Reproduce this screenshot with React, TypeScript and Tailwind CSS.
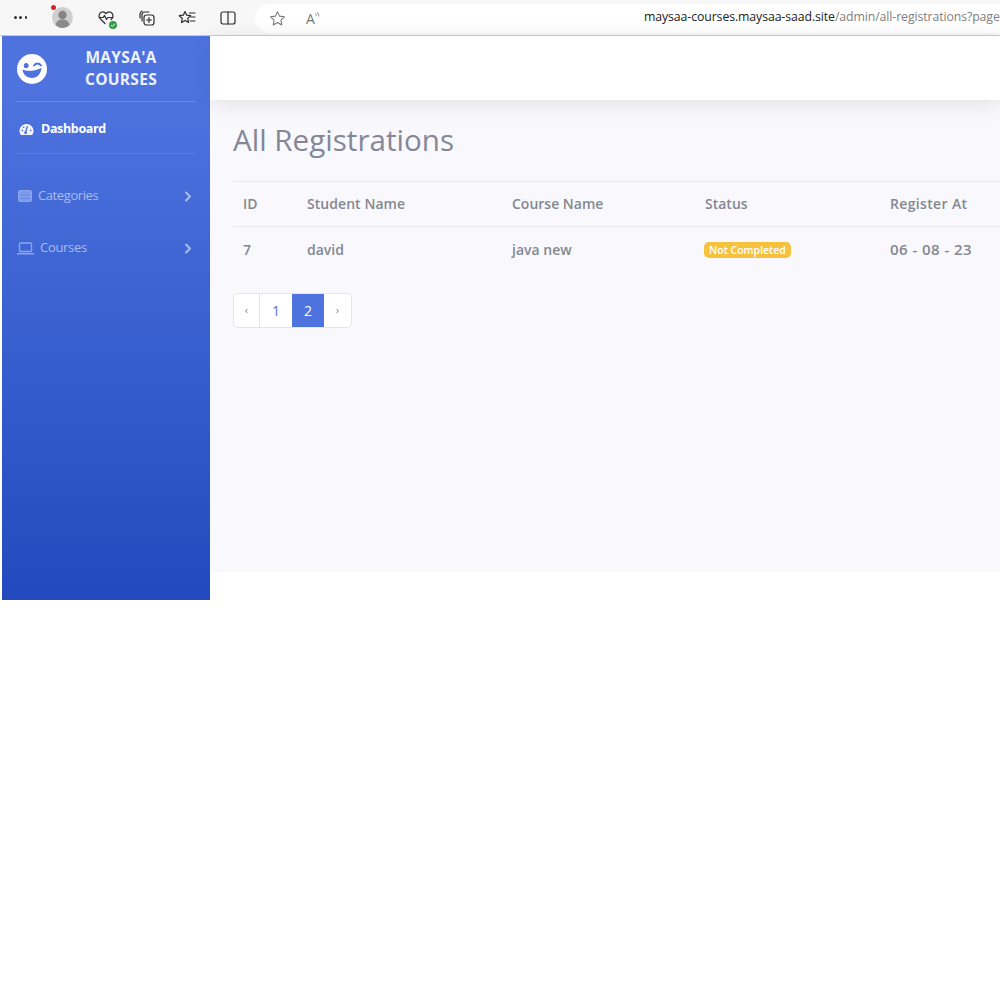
import React from "react";

const Chevron = () => (
  <svg width="8" height="11" viewBox="0 0 8 11" fill="none" className="shrink-0">
    <path d="M2 1.500 6 5.500 2 9.500" stroke="#a9bbef" strokeWidth="2.100" strokeLinecap="round" strokeLinejoin="round" />
  </svg>
);

const Wink = () => (
  <svg width="30" height="30" viewBox="0 0 30 30" className="shrink-0">
    <circle cx="15" cy="15" r="15" fill="#ffffff" />
    <ellipse cx="9.200" cy="11.500" rx="2.400" ry="2.600" fill="#4e73df" />
    <path d="M17 11.500c2-2.600 5-2.600 7 0" stroke="#4e73df" strokeWidth="2" fill="none" strokeLinecap="round" />
    <path d="M5.500 15.500c4 2 11 2 19-1.500-.5 6-4.500 10-9.500 10-5.500 0-9-4-9.500-8.500Z" fill="#4e73df" />
  </svg>
);

const Gauge = () => (
  <svg width="15" height="13" viewBox="0 0 16 14" className="shrink-0">
    <path d="M8 1a7.500 7.500 0 0 0-6.400 11.400c.2.300.5.600.9.600h11c.4 0 .7-.3.9-.6A7.500 7.500 0 0 0 8 1Z" fill="#f4f6fd" />
    <path d="M8.800 4 7.200 9.500" stroke="#4e73df" strokeWidth="1.500" strokeLinecap="round" />
    <circle cx="7" cy="10.500" r="1.500" fill="#4e73df" />
    <circle cx="3.500" cy="8" r=".9" fill="#4e73df" />
    <circle cx="12.500" cy="8" r=".9" fill="#4e73df" />
    <circle cx="5" cy="4.800" r=".9" fill="#4e73df" />
  </svg>
);

const ListBox = () => (
  <svg width="14" height="12" viewBox="0 0 14 12" className="shrink-0">
    <rect x="0.500" y="0.500" width="13" height="11" rx="1.500" fill="#7f9ae9" stroke="#8ca5ec" />
    <path d="M2.500 8.500h9M2.500 5h9" stroke="#6685e4" strokeWidth="1" />
  </svg>
);

const Laptop = () => (
  <svg width="17" height="13" viewBox="0 0 17 13" fill="none" className="shrink-0">
    <rect x="2.500" y="1" width="12" height="8.500" rx="1" stroke="#8ca5ec" strokeWidth="1.400" />
    <path d="M.500 11.800h16" stroke="#8ca5ec" strokeWidth="1.600" strokeLinecap="round" />
  </svg>
);

const ToolIcon = ({ children }: { children: React.ReactNode }) => (
  <svg width="18" height="18" viewBox="0 0 18 18" fill="none" stroke="#2d2d2d" strokeWidth="1.200" strokeLinejoin="round" strokeLinecap="round" className="shrink-0">
    {children}
  </svg>
);

const Toolbar = () => (
  <div className="flex h-[36px] shrink-0 items-start border-b border-[#c9c9c9] bg-[#f7f7f7]">
    <div className="flex h-[35px] w-[255px] shrink-0 items-center pl-[14px]">
      <span className="flex w-[13px] shrink-0 justify-between">
        <i className="block size-[2.500px] rounded-full bg-[#333]" />
        <i className="block size-[2.500px] rounded-full bg-[#333]" />
        <i className="block size-[2.500px] rounded-full bg-[#333]" />
      </span>
      <span className="relative ml-[25px] flex size-[21px] shrink-0 items-center justify-center overflow-visible">
        <svg width="21" height="21" viewBox="0 0 21 21">
          <circle cx="10.500" cy="10.500" r="10.500" fill="#cfcfcf" />
          <circle cx="10.500" cy="8" r="4.200" fill="#858585" />
          <path d="M3.500 18c.8-4 3.500-5.500 7-5.500s6.200 1.500 7 5.500c-2 1.800-4.500 3-7 3s-5-1.200-7-3Z" fill="#8a8a8a" />
        </svg>
        <span className="absolute left-[-1px] top-[-2px] size-[5px] rounded-full bg-[#d9232e]" />
      </span>
      <span className="relative ml-[24px]">
        <ToolIcon>
          <path d="M8 14.500 3 9.500C.8 7 2.500 2.800 5.600 2.800c1.500 0 2.600.7 3.400 1.900.8-1.200 1.900-1.900 3.400-1.900 3.100 0 4.800 4.200 2.600 6.700l-1 1" />
          <path d="M2.500 8.500h3.500l1.500-2 2 4 1.500-2H15" />
        </ToolIcon>
        <span className="absolute bottom-[-2px] right-[-2px] flex size-[8px] items-center justify-center rounded-full bg-[#2f9e44]">
          <svg width="6" height="6" viewBox="0 0 6 6" fill="none">
            <path d="m1 3 1.400 1.400L5 1.700" stroke="#ffffff" strokeWidth="1" />
          </svg>
        </span>
      </span>
      <span className="ml-[23px]">
        <ToolIcon>
          <path d="M4 12V5.500A2.500 2.500 0 0 1 6.500 3H11" />
          <path d="M2 9V5a4 4 0 0 1 2-3" />
          <rect x="6" y="6" width="10" height="10" rx="2.500" />
          <path d="M11 8.500v5M8.500 11h5" />
        </ToolIcon>
      </span>
      <span className="ml-[22px]">
        <ToolIcon>
          <path d="m7 2.500 1.700 3.700 4 .5-3 2.700.8 4L7 11.400l-3.500 2 .8-4-3-2.700 4-.5L7 2.500Z" />
          <path d="M11.500 4H17M13 8h4M12 12h5" />
        </ToolIcon>
      </span>
      <span className="ml-[23px]">
        <ToolIcon>
          <rect x="2" y="3" width="14" height="12" rx="2" />
          <path d="M9 3v12" />
        </ToolIcon>
      </span>
    </div>
    <div className="mt-[4px] flex h-[29px] flex-1 items-center overflow-hidden rounded-l-[15px] bg-white pl-[14px]">
      <svg width="17" height="17" viewBox="0 0 18 18" fill="none" stroke="#777" strokeWidth="1.100" strokeLinejoin="round" className="shrink-0">
        <path d="m9 1.800 2.200 4.700 5.100.7-3.700 3.500.9 5.100L9 13.300l-4.500 2.500.9-5.100-3.700-3.500 5.100-.7L9 1.800Z" />
      </svg>
      <span className="ml-[20px] flex w-[16px] shrink-0 items-start font-['Open_Sans',sans-serif] text-[14px] leading-none text-[#777]">
        A
        <svg width="6" height="7" viewBox="0 0 6 7" fill="none" stroke="#777" strokeWidth=".8" className="-ml-[1px] shrink-0">
          <path d="M1 1c1 .8 1.300 1.800 1.200 3M3 0c1.400 1.200 2 2.800 1.800 4.500" />
        </svg>
      </span>
      <span className="ml-[322px] whitespace-nowrap pb-[2px] font-['Open_Sans',sans-serif] text-[12.300px] tracking-[-0.100px] text-[#222]">
        maysaa-courses.maysaa-saad.site<span className="text-[#808080]">/admin/all-registrations?page</span>
      </span>
    </div>
  </div>
);

const Sidebar = () => (
  <aside className="ml-[2px] flex w-[208px] shrink-0 flex-col bg-gradient-to-b from-[#4e73df] from-10% to-[#224abe] px-[14px] font-['Open_Sans',sans-serif] text-[13px]">
    <div className="flex h-[66px] shrink-0 items-center border-b border-[#6a89e4] pl-[1px]">
      <Wink />
      <div className="mb-[2px] ml-[24px] w-[100px] text-center text-[15.500px] font-bold leading-[22px] tracking-[0.300px] text-[#eef1fc]">
        MAYSA'A<br />COURSES
      </div>
    </div>
    <div className="flex h-[52px] shrink-0 items-center gap-[7px] border-b border-[#5c7ee2] pl-[3px] pt-[3px] text-[12.500px] font-bold tracking-[-0.350px] text-white">
      <Gauge />
      <span>Dashboard</span>
    </div>
    <div className="mt-[16px] flex h-[52px] shrink-0 items-center pl-[2px] text-[#a9bbef]">
      <ListBox />
      <span className="ml-[6px] flex-1 tracking-[-0.400px]">Categories</span>
      <span className="mr-[4px]"><Chevron /></span>
    </div>
    <div className="flex h-[52px] shrink-0 items-center pl-[1px] text-[#a9bbef]">
      <Laptop />
      <span className="ml-[6px] flex-1 tracking-[-0.300px]">Courses</span>
      <span className="mr-[4px]"><Chevron /></span>
    </div>
  </aside>
);

const columns = "grid grid-cols-[64px_205px_193px_185px_140px]";

const Main = () => (
  <main className="flex min-w-0 flex-1 flex-col self-start font-['Open_Sans',sans-serif]">
    <div className="relative h-[64px] shrink-0 bg-white shadow-[0_4px_20px_rgba(58,59,69,0.12)]" />
    <div className="h-[472px] shrink-0 bg-[#f9f9fd] pl-[23px] pt-[21px]">
      <h1 className="h-[40px] text-[29.600px] leading-[38px] text-[#858796]">All Registrations</h1>
      <div className="mt-[20px] w-[900px] text-[14px] font-semibold text-[#858790]">
        <div className={`${columns} h-[46px] items-center border-y border-[#e7e8ee] pb-[2px] pl-[10px]`}>
          <span>ID</span>
          <span className="tracking-[0.050px]">Student Name</span>
          <span>Course Name</span>
          <span>Status</span>
          <span className="tracking-[0.350px]">Register At</span>
        </div>
        <div className={`${columns} h-[46px] items-center pb-[1px] pl-[10px]`}>
          <span>7</span><span>david</span><span>java new</span>
          <span>
            <span className="-ml-[1px] inline-block h-[16px] -translate-y-[1px] rounded-[5px] bg-[#f6c23e] px-[5px] text-[10.500px] font-semibold leading-[16px] tracking-[0px] text-white">Not Completed</span>
          </span>
          <span className="text-[15px] tracking-[0.450px]">06 - 08 - 23</span>
        </div>
      </div>
      <nav className="mt-[20px] flex h-[35px] w-[119px] overflow-hidden rounded-[5px] border border-[#e3e6f0] bg-white text-[14px] text-[#4e73df]">
        <span className="flex w-[26px] items-center justify-center border-r border-[#e3e6f0] text-[11px] text-[#858796]">‹</span>
        <span className="flex w-[32px] items-center justify-center">1</span>
        <span className="flex w-[32px] items-center justify-center bg-[#4e73df] text-white">2</span>
        <span className="flex flex-1 items-center justify-center text-[11px] text-[#858796]">›</span>
      </nav>
    </div>
  </main>
);

export default function App() {
  return (
    <div className="flex h-[1000px] w-[1000px] flex-col overflow-hidden bg-white">
      <Toolbar />
      <div className="flex h-[564px] shrink-0">
        <Sidebar />
        <Main />
      </div>
    </div>
  );
}
